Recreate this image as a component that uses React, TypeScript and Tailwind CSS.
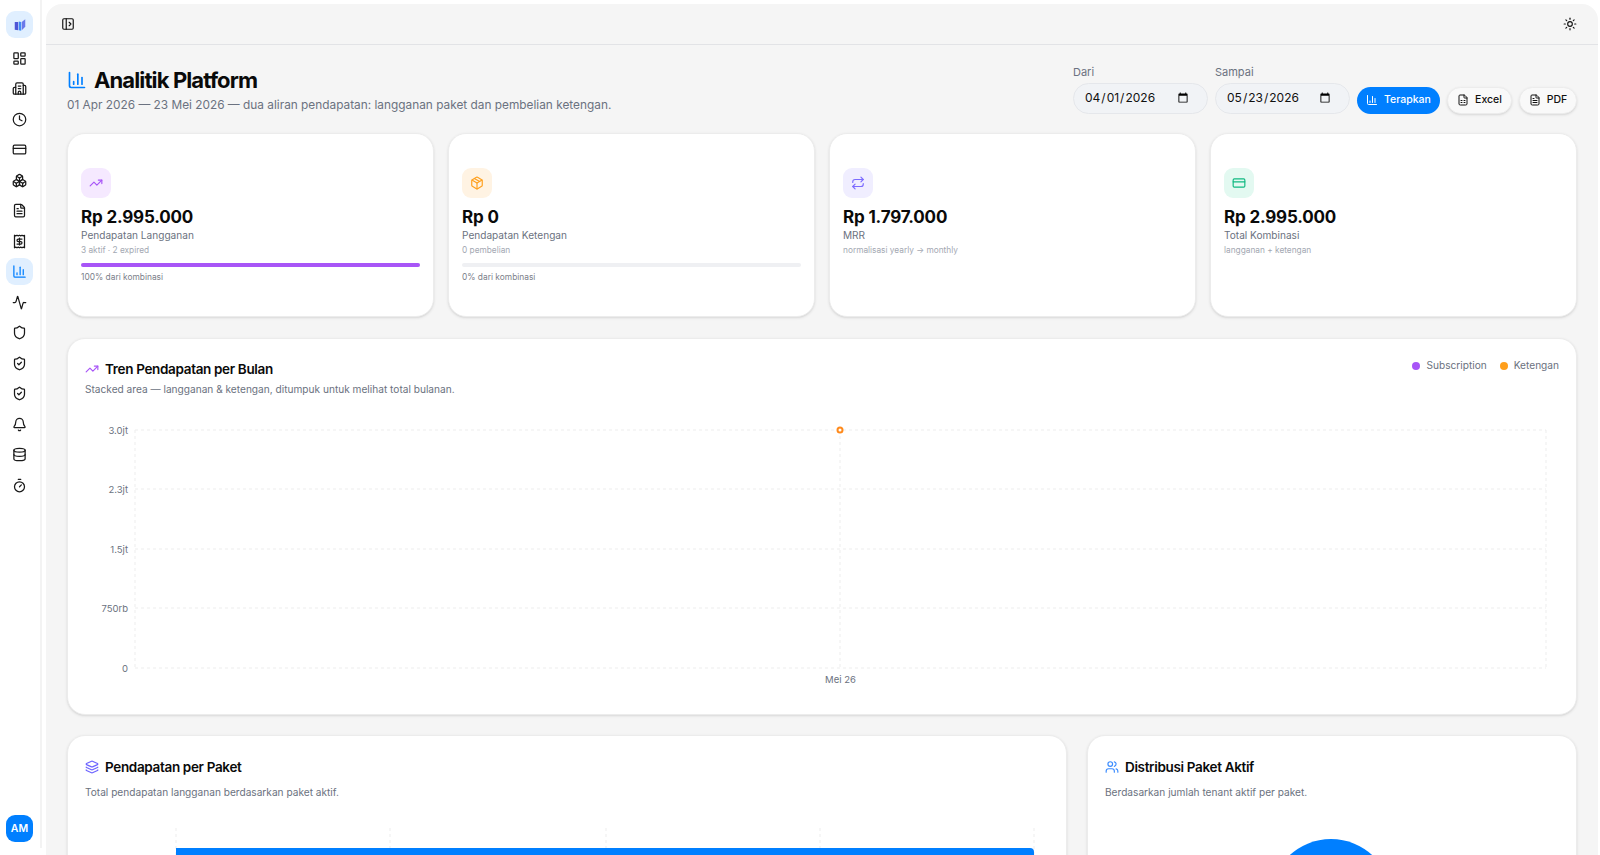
import {
  Activity, Bell, Boxes, Building2, ChartColumn, Clock, CreditCard, Database, FileSpreadsheet, FileText,
  Layers, LayoutDashboard, Package, PanelLeftOpen, Receipt, Repeat, Shield, ShieldCheck, Sun, Timer,
  TrendingUp, Users,
} from 'lucide-react';

const navIcons = [
  LayoutDashboard, Building2, Clock, CreditCard, Boxes, FileText, Receipt, ChartColumn,
  Activity, Shield, ShieldCheck, ShieldCheck, Bell, Database, Timer,
];

function Sidebar() {
  return (
    <aside className="w-[42px] h-[848px] shrink-0 border-r-2 border-[#f3f3f3] flex flex-col items-center pt-[11px] pb-[6px] pr-[1px]">
      <div className="w-[27px] h-[27px] rounded-[9px] bg-[#e0efff] flex items-center justify-center">
        <svg width="14" height="14" viewBox="0 0 24 24">
          <path d="M3 7h6v14l-6 -1z" fill="#4f55d6" />
          <path d="M10 6l4 1v15l-4 -1z" fill="#3f8cf5" />
          <path d="M15 7l6 -5v13l-6 6z" fill="#6a78ea" />
        </svg>
      </div>
      <nav className="mt-[6.5px] flex flex-col gap-[3.5px]">
        {navIcons.map((Icon, i) => (
          <div
            key={i}
            className={`w-[27px] h-[27px] rounded-[9px] flex items-center justify-center ${Icon === ChartColumn ? 'bg-[#e0efff] text-[#007fff]' : 'text-[#1a1a1a]'}`}
          >
            <Icon size={15} strokeWidth={2} />
          </div>
        ))}
      </nav>
      <div className="mt-auto w-[27px] h-[27px] rounded-[9px] bg-[#007fff] text-white text-[10.5px] font-semibold flex items-center justify-center">
        AM
      </div>
    </aside>
  );
}

function DateField({ label, value }: { label: string; value: string }) {
  return (
    <div className="w-[135px]">
      <label className="block text-[11px] leading-[14px] text-[#6b7280] mb-[3.5px]">{label}</label>
      <input
        type="date"
        defaultValue={value}
        className="w-full h-[31px] rounded-full border border-[#e5e7eb] bg-[#f1f3f6] pl-[10px] pr-[16px] text-[12px] text-[#111] outline-none"
      />
    </div>
  );
}

function ExportButton({ icon: Icon, label, width }: { icon: typeof FileText; label: string; width: string }) {
  return (
    <button className={`${width} h-[27px] rounded-full bg-[#f9f9f9] border border-[#ececec] shadow-sm flex items-center justify-center gap-[6px] text-[10.5px] font-medium text-[#111]`}>
      <Icon size={12} />
      {label}
    </button>
  );
}

type Stat = {
  icon: typeof FileText;
  tint: string;
  value: string;
  label: string;
  sub: string;
  bar?: string;
  note?: string;
};

const stats: Stat[] = [
  { icon: TrendingUp, tint: 'bg-[#f5e9ff] text-[#a855f7]', value: 'Rp 2.995.000', label: 'Pendapatan Langganan', sub: '3 aktif · 2 expired', bar: 'w-full', note: '100% dari kombinasi' },
  { icon: Package, tint: 'bg-[#fff3e3] text-[#ff9f1c]', value: 'Rp 0', label: 'Pendapatan Ketengan', sub: '0 pembelian', bar: 'w-0', note: '0% dari kombinasi' },
  { icon: Repeat, tint: 'bg-[#f0eeff] text-[#7c6cff]', value: 'Rp 1.797.000', label: 'MRR', sub: 'normalisasi yearly → monthly' },
  { icon: CreditCard, tint: 'bg-[#e3f9f1] text-[#10b981]', value: 'Rp 2.995.000', label: 'Total Kombinasi', sub: 'langganan + ketengan' },
];

function StatCard({ stat }: { stat: Stat }) {
  const Icon = stat.icon;
  return (
    <div className="h-[184px] bg-white rounded-[18px] border border-[#ececec] shadow-sm px-[13px] pt-[34px]">
      <div className={`w-[30px] h-[30px] rounded-[9px] flex items-center justify-center ${stat.tint}`}>
        <Icon size={14} />
      </div>
      <div className="mt-[8px] text-[17px] leading-[22px] font-bold tracking-[-0.01em] text-[#0a0a0a]">{stat.value}</div>
      <div className="text-[10.1px] leading-[14px] text-[#6b7280]">{stat.label}</div>
      <div className="text-[8.3px] leading-[12px] mt-[2px] text-[#a3a8b2]">{stat.sub}</div>
      {stat.bar && (
        <>
          <div className="mt-[7px] h-[4px] rounded-full bg-[#eff0f3]">
            <div className={`h-full rounded-full bg-[#a855f7] ${stat.bar}`} />
          </div>
          <div className="mt-[2.5px] text-[8.4px] leading-[14px] text-[#7b808a]">{stat.note}</div>
        </>
      )}
    </div>
  );
}

function TrendChart() {
  const rows = [
    { y: 20, label: '3.0jt' },
    { y: 79, label: '2.3jt' },
    { y: 139, label: '1.5jt' },
    { y: 198, label: '750rb' },
    { y: 258, label: '0' },
  ];
  const verticals = [67, 772, 1478];
  return (
    <svg width="1507" height="290" className="block" fontFamily="Inter, sans-serif">
      {rows.map(r => (
        <g key={r.label}>
          <line x1="67" x2="1478" y1={r.y} y2={r.y} stroke="#ededed" strokeDasharray="3 3" />
          <text x="60" y={r.y + 3.5} textAnchor="end" fontSize="9.5" fill="#6b7280">{r.label}</text>
        </g>
      ))}
      {verticals.map(x => (
        <line key={x} x1={x} x2={x} y1="20" y2="258" stroke="#ededed" strokeDasharray="3 3" />
      ))}
      <circle cx="772" cy="20" r="2.5" fill="#fff" stroke="#ff8a1c" strokeWidth="2" />
      <text x="772.5" y="273" textAnchor="middle" fontSize="9.5" fill="#6b7280">Mei 26</text>
    </svg>
  );
}

function PanelHeader({ icon: Icon, color, title, sub, top, subGap }: { icon: typeof FileText; color: string; title: string; sub: string; top: string; subGap: string }) {
  return (
    <div className={`px-[17px] ${top}`}>
      <div className="flex items-center gap-[6px]">
        <Icon size={14} className={color} />
        <h3 className="text-[13.5px] leading-[20px] font-semibold tracking-[-0.025em] text-[#0a0a0a]">{title}</h3>
      </div>
      <p className={`${subGap} text-[10.15px] leading-[16px] text-[#6b7280]`}>{sub}</p>
    </div>
  );
}

export default function App() {
  return (
    <div className="h-screen overflow-hidden bg-white flex font-['Inter',sans-serif]">
      <Sidebar />
      <main className="mt-1 ml-1 mr-[2px] flex-1 min-w-0 rounded-t-2xl bg-[#f5f5f5] overflow-hidden">
        <header className="h-[41px] border-b border-[#e2e3e6] flex items-center justify-between pl-[15px] pr-[21px]">
          <PanelLeftOpen size={14} className="text-[#111]" />
          <Sun size={14} className="text-[#111]" />
        </header>

        <div className="pl-[21px] pr-[21px]">
          <div className="flex items-start justify-between pt-[20px] h-[88px]">
            <div className="pt-[1px]">
              <div className="flex items-center gap-[7px]">
                <ChartColumn size={20} className="text-[#007fff]" />
                <h1 className="text-[22px] leading-[28px] font-bold tracking-[-0.04em] text-[#0a0a0a]">Analitik Platform</h1>
              </div>
              <p className="mt-[2px] text-[11.85px] leading-[18px] text-[#6b7280]">
                01 Apr 2026 — 23 Mei 2026 — dua aliran pendapatan: langganan paket dan pembelian ketengan.
              </p>
            </div>
            <div className="flex items-end gap-[7px]">
              <DateField label="Dari" value="2026-04-01" />
              <DateField label="Sampai" value="2026-05-23" />
              <button className="w-[83px] h-[27px] rounded-full bg-[#007fff] text-white flex items-center justify-center gap-[6px] text-[10.5px] font-medium">
                <ChartColumn size={12} />
                Terapkan
              </button>
              <ExportButton icon={FileSpreadsheet} label="Excel" width="w-[65px]" />
              <ExportButton icon={FileText} label="PDF" width="w-[58px]" />
            </div>
          </div>

          <div className="grid grid-cols-4 gap-[14px]">
            {stats.map(s => (
              <StatCard key={s.label} stat={s} />
            ))}
          </div>

          <section className="relative mt-[21px] h-[377px] bg-white rounded-[18px] border border-[#ececec] shadow-sm">
            <PanelHeader
              icon={TrendingUp}
              color="text-[#a855f7]"
              title="Tren Pendapatan per Bulan"
              sub="Stacked area — langganan & ketengan, ditumpuk untuk melihat total bulanan."
              top="pt-[20px]"
              subGap="mt-[2px]"
            />
            <div className="absolute top-[19px] right-[17px] flex items-center gap-[13px] text-[10.15px] text-[#6b7280]">
              <span className="flex items-center gap-[6px]">
                <span className="w-2 h-2 rounded-full bg-[#a855f7]" />
                Subscription
              </span>
              <span className="flex items-center gap-[6px]">
                <span className="w-2 h-2 rounded-full bg-[#ff9f1c]" />
                Ketengan
              </span>
            </div>
            <div className="mt-[13px]">
              <TrendChart />
            </div>
          </section>

          <div className="mt-[20px] grid grid-cols-[1000px_1fr] gap-[20px]">
            <section className="h-[300px] bg-white rounded-[18px] border border-[#ececec] shadow-sm">
              <PanelHeader
                icon={Layers}
                color="text-[#6c63ff]"
                title="Pendapatan per Paket"
                sub="Total pendapatan langganan berdasarkan paket aktif."
                top="pt-[21px]"
                subGap="mt-[7px]"
              />
              <svg width="998" height="120" className="block mt-[28px]">
                {[108, 322, 538, 752, 966].map(x => (
                  <line key={x} x1={x} x2={x} y1="0" y2="40" stroke="#ededed" strokeDasharray="3 3" />
                ))}
                <path d="M108 20H962a4 4 0 0 1 4 4V120H108z" fill="#007fff" />
              </svg>
            </section>
            <section className="h-[300px] bg-white rounded-[18px] border border-[#ececec] shadow-sm">
              <PanelHeader
                icon={Users}
                color="text-[#3b8cff]"
                title="Distribusi Paket Aktif"
                sub="Berdasarkan jumlah tenant aktif per paket."
                top="pt-[21px]"
                subGap="mt-[7px]"
              />
              <svg width="488" height="140" className="block mt-[28px]">
                <circle cx="243" cy="72" r="61" fill="#007fff" />
              </svg>
            </section>
          </div>
        </div>
      </main>
    </div>
  );
}
